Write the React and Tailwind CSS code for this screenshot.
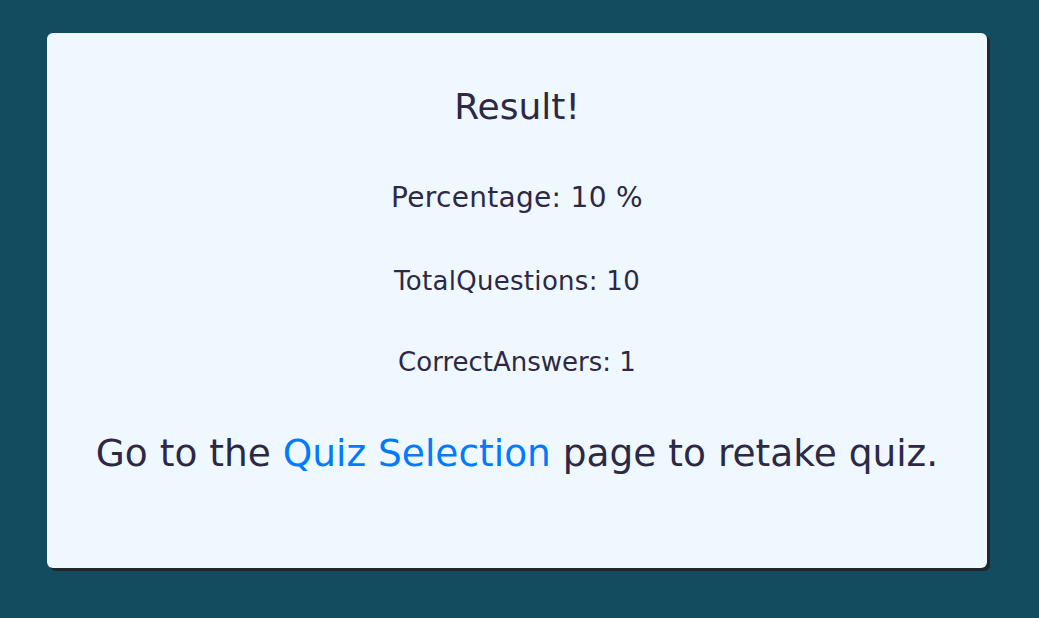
export default function App() {
  return (
    <div className="min-h-[618px] bg-[#134b5f] pt-[33px] pl-[47px] font-['DejaVu_Sans',sans-serif] text-[#2c2846]">
      <div className="w-[940px] h-[535px] bg-[#f0f8ff] rounded-[6px] shadow-[3px_3px_0_#23262b] flex flex-col items-center pt-[54px]">
        <h1 className="text-[36px] leading-[40px]">Result!</h1>
        <h3 className="mt-[55px] text-[28px] leading-[32px] tracking-[0.3px]">Percentage: 10 %</h3>
        <p className="mt-[52px] text-[26px] leading-[30px] tracking-[0.3px]">TotalQuestions: 10</p>
        <p className="mt-[51px] text-[26px] leading-[30px]">CorrectAnswers: 1</p>
        <p className="mt-[52px] text-[37.5px] leading-[48px]">
          Go to the <a href="#" className="text-[#007bff]">Quiz Selection</a> page to retake quiz.
        </p>
      </div>
    </div>
  );
}
